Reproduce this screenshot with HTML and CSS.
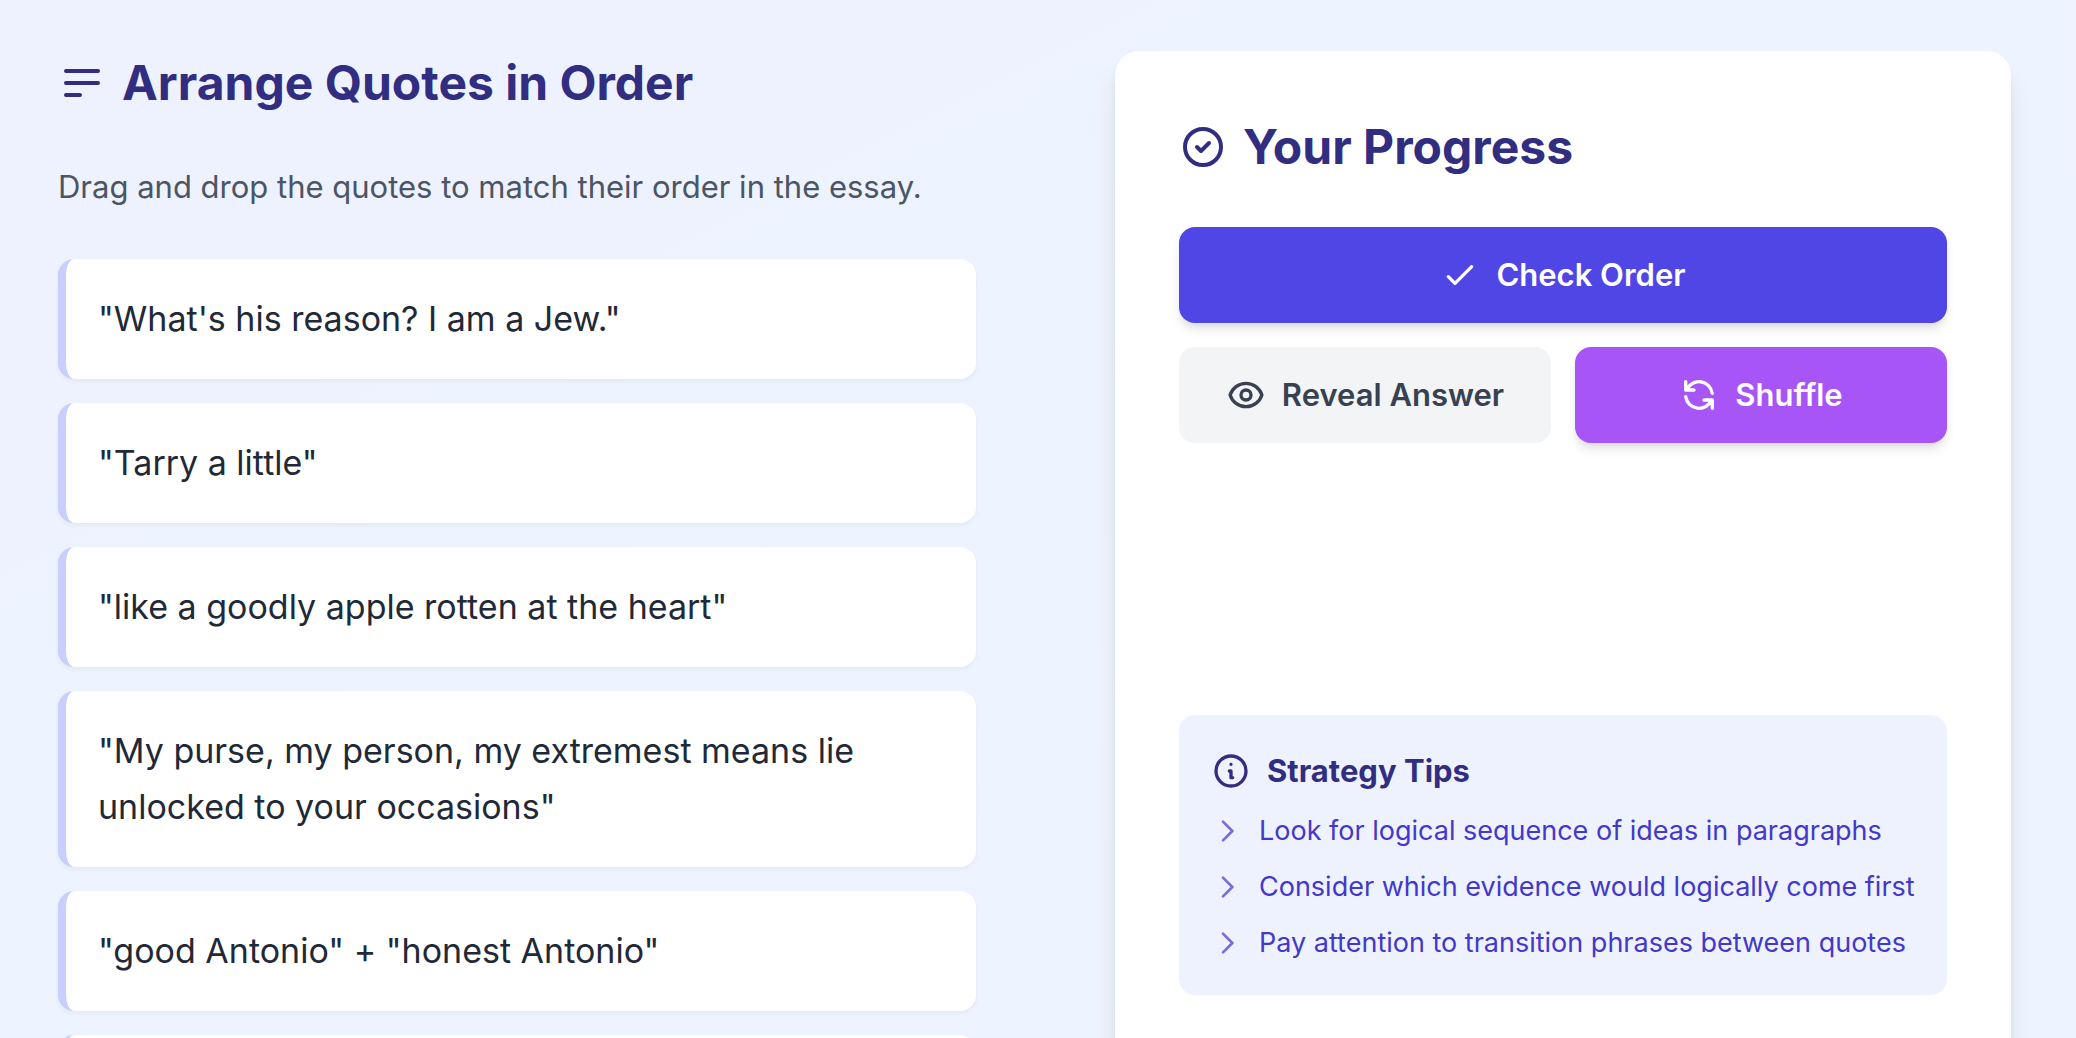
FILE: index.html
```html
<!DOCTYPE html>
<html lang="en">
<head>
<meta charset="utf-8">
<meta name="viewport" content="width=device-width, initial-scale=1">
<title>Arrange Quotes in Order</title>
<link rel="stylesheet" href="styles.css">
</head>
<body>
<main class="page">
  <section class="arrange">
    <h2 class="heading">
      <svg class="icon icon-lg" viewBox="0 0 24 24" aria-hidden="true"><path d="M4 6h16M4 12h16M4 18h7"/></svg>
      Arrange Quotes in Order
    </h2>
    <p class="intro">Drag and drop the quotes to match their order in the essay.</p>
    <ol class="quotes">
      <li class="quote" draggable="true">"What's his reason? I am a Jew."</li>
      <li class="quote" draggable="true">"Tarry a little"</li>
      <li class="quote" draggable="true">"like a goodly apple rotten at the heart"</li>
      <li class="quote" draggable="true">"My purse, my person, my extremest means lie unlocked to your occasions"</li>
      <li class="quote" draggable="true">"good Antonio" + "honest Antonio"</li>
      <li class="quote" draggable="true"></li>
    </ol>
  </section>

  <section class="progress">
    <h2 class="heading">
      <svg class="icon icon-lg" viewBox="0 0 24 24" aria-hidden="true"><path d="M9 12l2 2 4-4m6 2a9 9 0 11-18 0 9 9 0 0118 0z"/></svg>
      Your Progress
    </h2>
    <div class="actions">
      <button class="button button-check" type="button">
        <svg class="icon icon-md" viewBox="0 0 24 24" aria-hidden="true"><path d="M5 13l4 4L19 7"/></svg>
        Check Order
      </button>
      <button class="button button-reveal" type="button">
        <svg class="icon icon-md" viewBox="0 0 24 24" aria-hidden="true"><path d="M15 12a3 3 0 11-6 0 3 3 0 016 0z"/><path d="M2.458 12C3.732 7.943 7.523 5 12 5c4.478 0 8.268 2.943 9.542 7-1.274 4.057-5.064 7-9.542 7-4.477 0-8.268-2.943-9.542-7z"/></svg>
        Reveal Answer
      </button>
      <button class="button button-shuffle" type="button">
        <svg class="icon icon-md" viewBox="0 0 24 24" aria-hidden="true"><path d="M4 4v5h.582m15.356 2A8.001 8.001 0 004.582 9m0 0H9m11 11v-5h-.581m0 0a8.003 8.003 0 01-15.357-2m15.357 2H15"/></svg>
        Shuffle
      </button>
    </div>
    <div class="status" aria-live="polite"></div>
    <aside class="tips">
      <h3 class="tips-title">
        <svg class="icon icon-md" viewBox="0 0 24 24" aria-hidden="true"><path d="M13 16h-1v-4h-1m1-4h.01M21 12a9 9 0 11-18 0 9 9 0 0118 0z"/></svg>
        Strategy Tips
      </h3>
      <ul class="tips-list">
        <li class="tip"><svg class="icon icon-sm" viewBox="0 0 24 24" aria-hidden="true"><path d="M9 5l7 7-7 7"/></svg>Look for logical sequence of ideas in paragraphs</li>
        <li class="tip"><svg class="icon icon-sm" viewBox="0 0 24 24" aria-hidden="true"><path d="M9 5l7 7-7 7"/></svg>Consider which evidence would logically come first</li>
        <li class="tip"><svg class="icon icon-sm" viewBox="0 0 24 24" aria-hidden="true"><path d="M9 5l7 7-7 7"/></svg>Pay attention to transition phrases between quotes</li>
      </ul>
    </aside>
  </section>
</main>
</body>
</html>
```
FILE: styles.css
```css
*,
*::before,
*::after {
  box-sizing: border-box;
}

body,
h2,
h3,
p,
ol,
ul {
  margin: 0;
  padding: 0;
}

body {
  font-family: Inter, "Liberation Sans", Arial, sans-serif;
  font-size: 31px;
  line-height: 48px;
  color: #1f2937;
}

.page {
  display: grid;
  grid-template-columns: minmax(0, 918fr) minmax(0, 896fr);
  column-gap: 139px;
  height: 100vh;
  overflow: hidden;
  padding: 51px 65px 0 58px;
  background: linear-gradient(to bottom right, #eef2ff 20%, #ecf4ff);
}

.icon {
  flex: none;
  fill: none;
  stroke: currentColor;
  stroke-width: 2;
  stroke-linecap: round;
  stroke-linejoin: round;
}

.icon-lg {
  width: 48px;
  height: 48px;
}

.icon-md {
  width: 40px;
  height: 40px;
}

.icon-sm {
  width: 32px;
  height: 32px;
  opacity: 0.7;
}

.heading {
  display: flex;
  align-items: center;
  gap: 16px;
  margin-bottom: 48px;
  font-size: 48px;
  line-height: 64px;
  font-weight: 700;
  color: #312e81;
}

.intro {
  margin-bottom: 48px;
  color: #4b5563;
}

.quotes {
  display: flex;
  flex-direction: column;
  gap: 24px;
  list-style: none;
}

.quote {
  min-height: 120px;
  padding: 32px;
  border-left: 8px solid #c8cefd;
  border-radius: 16px;
  background: #fff;
  box-shadow: 0 2px 4px rgba(0, 0, 0, 0.05);
  font-size: 34px;
  line-height: 56px;
  cursor: grab;
}

.progress {
  min-height: 1100px;
  padding: 64px;
  border-radius: 24px;
  background: #fff;
  box-shadow: 0 20px 30px -6px rgba(0, 0, 0, 0.1), 0 8px 12px -4px rgba(0, 0, 0, 0.1);
}

.actions {
  display: grid;
  grid-template-columns: 1fr 1fr;
  gap: 24px;
}

.button {
  display: flex;
  align-items: center;
  justify-content: center;
  gap: 16px;
  padding: 24px;
  border: 0;
  border-radius: 16px;
  font: inherit;
  font-weight: 600;
  white-space: nowrap;
  color: #fff;
  cursor: pointer;
}

.button-check {
  grid-column: 1 / -1;
  background: #4f46e5;
  box-shadow: 0 8px 12px -2px rgba(0, 0, 0, 0.1), 0 4px 8px -4px rgba(0, 0, 0, 0.1);
}

.button-reveal {
  background: #f3f4f6;
  color: #374151;
}

.button-shuffle {
  background: #a855f7;
  box-shadow: 0 8px 12px -2px rgba(0, 0, 0, 0.1), 0 4px 8px -4px rgba(0, 0, 0, 0.1);
}

.status {
  min-height: 176px;
  margin: 48px 0;
}

.tips {
  padding: 32px;
  border-radius: 16px;
  background: #eef2ff;
}

.tips-title {
  display: flex;
  align-items: center;
  gap: 16px;
  margin-bottom: 16px;
  font-size: 31px;
  line-height: 48px;
  font-weight: 700;
  color: #312e81;
}

.tips-list {
  display: flex;
  flex-direction: column;
  gap: 16px;
  list-style: none;
}

.tip {
  display: flex;
  align-items: center;
  gap: 16px;
  font-size: 27px;
  line-height: 40px;
  white-space: nowrap;
  color: #4338ca;
}
```
